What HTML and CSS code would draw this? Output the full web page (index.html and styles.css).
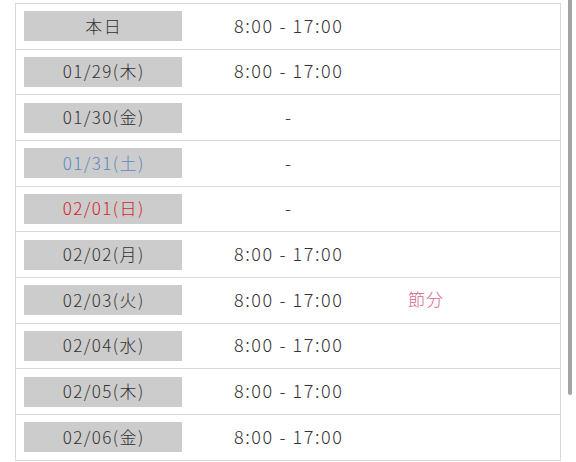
FILE: index.html
```html
<!DOCTYPE html>
<html lang="ja">
<head>
<meta charset="utf-8">
<link rel="stylesheet" href="styles.css">
</head>
<body>
<div class="schedule">
  <div class="row"><div class="date"><span class="day">本日</span></div><div class="time">8:00 - 17:00</div><div class="note"></div></div>
  <div class="row"><div class="date"><span class="day">01/29(木)</span></div><div class="time">8:00 - 17:00</div><div class="note"></div></div>
  <div class="row"><div class="date"><span class="day">01/30(金)</span></div><div class="time">-</div><div class="note"></div></div>
  <div class="row"><div class="date"><span class="day sat">01/31(土)</span></div><div class="time">-</div><div class="note"></div></div>
  <div class="row"><div class="date"><span class="day sun">02/01(日)</span></div><div class="time">-</div><div class="note"></div></div>
  <div class="row"><div class="date"><span class="day">02/02(月)</span></div><div class="time">8:00 - 17:00</div><div class="note"></div></div>
  <div class="row"><div class="date"><span class="day">02/03(火)</span></div><div class="time">8:00 - 17:00</div><div class="note">節分</div></div>
  <div class="row"><div class="date"><span class="day">02/04(水)</span></div><div class="time">8:00 - 17:00</div><div class="note"></div></div>
  <div class="row"><div class="date"><span class="day">02/05(木)</span></div><div class="time">8:00 - 17:00</div><div class="note"></div></div>
  <div class="row"><div class="date"><span class="day">02/06(金)</span></div><div class="time">8:00 - 17:00</div><div class="note"></div></div>
</div>
<div class="scrollbar"></div>
</body>
</html>
```
FILE: styles.css
```css
html, body {
  margin: 0;
  padding: 0;
  background: #fff;
  overflow: hidden;
}
body {
  font-family: "Noto Sans CJK JP", "Noto Sans", sans-serif;
  color: #333;
  font-size: 17px;
}
.schedule {
  margin: 3px 0 0 15px;
  width: 544px;
  border: 1px solid #d8d8d8;
  border-bottom: none;
}
.row {
  display: grid;
  grid-template-columns: 174px 196px 80px 1fr;
  align-items: center;
  height: 44.67px;
  border-bottom: 1px solid #d8d8d8;
}
.date {
  padding-left: 8px;
}
.day {
  display: flex;
  align-items: center;
  justify-content: center;
  box-sizing: border-box;
  width: 158px;
  height: 30px;
  padding-bottom: 2px;
  background: #cccccc;
  color: #333;
  font-weight: 300;
  letter-spacing: 1.4px;
  text-indent: 1.4px;
  line-height: 1;
}
.day.sat { color: #5a88c4; }
.day.sun { color: #d21f2b; }
.time {
  text-align: center;
  font-weight: 300;
  font-size: 18px;
  letter-spacing: 1.6px;
  text-indent: 1.6px;
  line-height: 1;
  padding-bottom: 3px;
}
.note {
  text-align: center;
  color: #d4618d;
  font-weight: 300;
  font-size: 17px;
  letter-spacing: 1px;
  line-height: 1;
  padding-bottom: 3px;
}
.scrollbar {
  position: absolute;
  left: 568px;
  top: 0;
  width: 4px;
  height: 395px;
  background: #a3a3a3;
  border-radius: 0 0 2px 2px;
}
```
